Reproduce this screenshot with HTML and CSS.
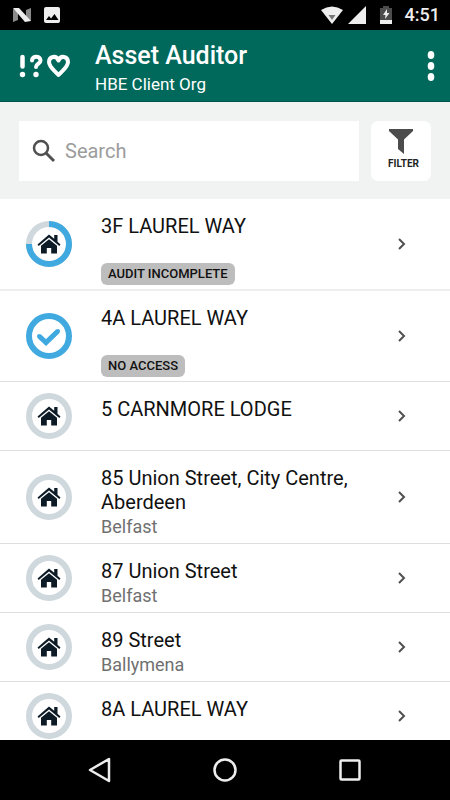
FILE: index.html
```html
<!DOCTYPE html>
<html lang="en">
<head>
<meta charset="utf-8">
<meta name="viewport" content="width=device-width, initial-scale=1">
<title>Asset Auditor</title>
<link rel="stylesheet" href="styles.css">
</head>
<body>
<svg class="defs" aria-hidden="true">
  <symbol id="house" viewBox="0 0 24 20">
    <path d="M12 0.500 0.500 10.500l1.200 1.500L12 3.600l10.300 8.400 1.200-1.500-3-2.700V1h-3.300v3.800z"/>
    <path d="M12 5.200 4 11.800V19.500h5.800v-5.500h4.400v5.500H20v-7.700z"/>
  </symbol>
  <symbol id="pending" viewBox="0 0 46 46">
    <circle cx="23" cy="23" r="20" fill="none" stroke="#cfd8dd" stroke-width="6"/>
    <use href="#house" x="11" y="13" width="24" height="20" fill="#0d1b26"/>
  </symbol>
  <symbol id="chevron" viewBox="0 0 12 16">
    <path d="m3 3 5 5-5 5" fill="none" stroke="#505050" stroke-width="2"/>
  </symbol>
</svg>
<div class="screen">
  <div class="status">
    <svg width="20" height="16" viewBox="0 0 20 16"><path d="M1 2v13l5-2V4zM19 1v13l-5-2V3z" fill="#8a8a8a"/><path d="M1 1h6l12 13-6 1z" fill="#eee"/></svg>
    <svg width="18" height="18" viewBox="0 0 18 18"><rect x="1" y="1" width="16" height="16" rx="2" fill="#eee"/><path d="m3 14 3-4 2 2.500L11.500 8l4 6z" fill="#000"/></svg>
    <span class="spacer"></span>
    <svg width="22" height="18" viewBox="0 0 22 18"><path d="M0 4Q11-3 22 4L11 18z" fill="#eee"/><path d="M7.500 9h7L11 14z" fill="#777"/></svg>
    <svg width="18" height="18" viewBox="0 0 18 18"><path d="M18 0v18H0z" fill="#eee"/></svg>
    <svg class="battery" width="12" height="18" viewBox="0 0 12 18"><path d="M0 2h3V0h6v2h3v12H0z" fill="#4c4c4c"/><path d="M0 14h12v4H0zM7 3 3 9h2.500L5 13l4.500-6H7z" fill="#eee"/></svg>
    <span class="clock">4:51</span>
  </div>
  <header class="appbar">
    <svg class="logo" width="52" height="26" viewBox="0 0 52 26" fill="none" stroke="#fff" stroke-linecap="round" stroke-linejoin="round">
      <path d="M3.500 4v9.500" stroke-width="4.500"/><path d="M13 7.500c0-5 8.500-5 8.500 0 0 3.500-4.500 3-4.500 6.500" stroke-width="4"/>
      <path d="M39.500 22C35.500 17.500 30 14 30 9c0-6 7.500-7 9.500-1.500C41.500 2 49 3 49 9c0 5-5.500 8.500-9.500 13z" stroke-width="4"/>
      <circle cx="3.500" cy="21.500" r="2.700" fill="#fff" stroke="none"/><circle cx="17" cy="21.500" r="2.700" fill="#fff" stroke="none"/>
    </svg>
    <div class="heading"><h1>Asset Auditor</h1><p>HBE Client Org</p></div>
    <button class="more" aria-label="More options"><svg width="8" height="32" viewBox="0 0 8 32" fill="#fff"><ellipse cx="4" cy="5" rx="3.300" ry="4"/><ellipse cx="4" cy="16" rx="3.300" ry="4"/><ellipse cx="4" cy="27" rx="3.300" ry="4"/></svg></button>
  </header>
  <div class="tools">
    <label class="search">
      <svg width="24" height="24" viewBox="0 0 24 24" fill="none" stroke="#505050"><circle cx="9" cy="9" r="7" stroke-width="2.500"/><path d="m14 14 8 8" stroke-width="3"/></svg>
      <input type="search" placeholder="Search" aria-label="Search">
    </label>
    <button class="filter"><svg width="24" height="25" viewBox="0 0 24 25"><path d="M0 0h24v2l-9 8.500V25l-6-5v-9.500L0 2z" fill="#4c4c4c"/></svg><span>FILTER</span></button>
  </div>
  <main class="list">
    <a class="row first" href="#">
      <svg class="ring" viewBox="0 0 46 46"><use href="#pending"/><path d="M23 3A20 20 0 1 1 3 23" fill="none" stroke="#3fa9e0" stroke-width="6"/></svg>
      <span class="info"><span class="title">3F LAUREL WAY</span><span class="place"></span><span class="badge">AUDIT INCOMPLETE</span></span>
      <svg class="chevron"><use href="#chevron"/></svg>
    </a>
    <a class="row" href="#">
      <svg class="ring" viewBox="0 0 46 46" fill="none" stroke="#3fa9e0"><circle cx="23" cy="23" r="20" stroke-width="6"/><path d="m13 23 7 6.500L32 18" stroke-width="5"/><path d="m13 23 7 6.500L32 18" stroke-width="4" stroke-linecap="round"/></svg>
      <span class="info"><span class="title">4A LAUREL WAY</span><span class="place"></span><span class="badge">NO ACCESS</span></span>
      <svg class="chevron"><use href="#chevron"/></svg>
    </a>
    <a class="row" href="#">
      <svg class="ring"><use href="#pending"/></svg>
      <span class="info"><span class="title">5 CARNMORE LODGE</span><span class="place"></span></span>
      <svg class="chevron"><use href="#chevron"/></svg>
    </a>
    <a class="row" href="#">
      <svg class="ring"><use href="#pending"/></svg>
      <span class="info"><span class="title">85 Union Street, City Centre, Aberdeen</span><span class="place">Belfast</span></span>
      <svg class="chevron"><use href="#chevron"/></svg>
    </a>
    <a class="row" href="#">
      <svg class="ring"><use href="#pending"/></svg>
      <span class="info"><span class="title">87 Union Street</span><span class="place">Belfast</span></span>
      <svg class="chevron"><use href="#chevron"/></svg>
    </a>
    <a class="row" href="#">
      <svg class="ring"><use href="#pending"/></svg>
      <span class="info"><span class="title">89 Street</span><span class="place">Ballymena</span></span>
      <svg class="chevron"><use href="#chevron"/></svg>
    </a>
    <a class="row" href="#">
      <svg class="ring"><use href="#pending"/></svg>
      <span class="info"><span class="title">8A LAUREL WAY</span><span class="place"></span></span>
      <svg class="chevron"><use href="#chevron"/></svg>
    </a>
  </main>
  <nav class="navbar">
    <button aria-label="Back"><svg width="26" height="26" viewBox="0 0 26 26"><path d="M22 2v22L3 13z"/></svg></button>
    <button aria-label="Home"><svg width="26" height="26" viewBox="0 0 26 26"><circle cx="13" cy="13" r="10.500"/></svg></button>
    <button aria-label="Recent apps"><svg width="26" height="26" viewBox="0 0 26 26"><rect x="3.500" y="3.500" width="19" height="19" rx="1"/></svg></button>
  </nav>
</div>
</body>
</html>
```
FILE: styles.css
```css
* { box-sizing: border-box; }
body { margin: 0; font-family: Roboto, sans-serif; color: #111; background: #fff; }
svg { display: block; flex: none; }
button { border: 0; padding: 0; background: none; font: inherit; }
.defs { display: none; }
.screen { display: flex; flex-direction: column; height: 100vh; }

.status { display: flex; align-items: center; height: 30px; padding: 0 10px 0 12px; gap: 11px; background: #000; color: #eee; }
.status .spacer { flex: 1; }
.status svg + svg { margin-left: -6px; }
.status svg:first-child + svg { margin-left: 0; }
.status .battery.battery { margin: 0 2px 0 3px; }
.clock { font-size: 18px; font-weight: 500; line-height: 30px; }

.appbar { display: flex; align-items: center; height: 72px; padding: 0 15px 0 19px; background: #00695c; border-bottom: 1px solid #00564a; color: #fff; }
.heading { flex: 1; padding: 6px 0 0 24px; }
.heading h1 { margin: 0; font-size: 25px; line-height: 30px; font-weight: 500; }
.heading p { margin: 0; font-size: 17px; line-height: 26px; }

.tools { display: flex; gap: 12px; padding: 19px 19px 18px; background: #f1f3f2; }
.search { display: flex; flex: 1; align-items: center; gap: 9px; height: 60px; padding: 0 13px; background: #fff; }
.search input { flex: 1; min-width: 0; border: 0; padding: 0; outline: 0; background: none; font: 20px/24px Roboto, sans-serif; }
.search input::placeholder { color: #9c9c9c; opacity: 1; }
.filter { display: flex; flex-direction: column; align-items: center; gap: 4px; width: 60px; height: 60px; padding-top: 8px; border-radius: 7px; background: #fff; color: #222; font-size: 10px; line-height: 12px; font-weight: 700; }
.filter span { padding-left: 5px; }

.list { flex: 1; min-height: 0; overflow: hidden; }
.row { display: flex; align-items: center; padding: 0 42px 0 26px; border-bottom: 1px solid #dedede; color: inherit; text-decoration: none; }
.first { border-bottom: 2px solid #eee; }
.ring { width: 46px; height: 46px; }
.info { flex: 1; display: flex; flex-direction: column; align-items: flex-start; padding: 15px 30px 4px 29px; }
.title { font-size: 20px; line-height: 24px; }
.place { min-height: 25px; font-size: 18px; line-height: 25px; color: #707070; }
.badge { padding: 0 7px; border-radius: 6px; background: #bdbdbd; font-size: 13px; line-height: 22px; font-weight: 500; }
.chevron { width: 12px; height: 16px; }

.navbar { display: flex; justify-content: center; align-items: center; gap: 99px; height: 60px; background: #000; }
.navbar svg { fill: none; stroke: #eee; stroke-width: 2.5; stroke-linejoin: round; }
```
